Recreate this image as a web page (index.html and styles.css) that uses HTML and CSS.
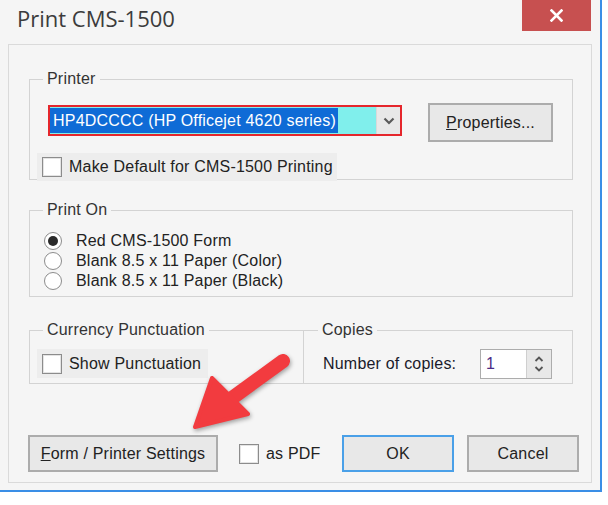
FILE: index.html
```html
<!DOCTYPE html>
<html>
<head>
<meta charset="utf-8">
<link rel="stylesheet" href="styles.css">
</head>
<body>
<div class="window">
  <div class="titlebar">
    <div class="title">Print CMS-1500</div>
    <div class="close">
      <svg width="13" height="13" viewBox="0 0 13 13"><path d="M1.5 1.5 L11.5 11.5 M11.5 1.5 L1.5 11.5" stroke="#fff" stroke-width="2.6" stroke-linecap="square"/></svg>
    </div>
  </div>
  <div class="panel">
    <fieldset class="group printer">
      <legend>Printer</legend>
      <div class="printer-row">
        <div class="combo">
          <div class="combo-field"><span class="sel">HP4DCCCC (HP Officejet 4620 series)</span></div>
          <div class="combo-btn">
            <svg width="12" height="8" viewBox="0 0 12 8"><path d="M1.5 1.5 L6 6 L10.5 1.5" fill="none" stroke="#5a5a5a" stroke-width="2.2"/></svg>
          </div>
        </div>
        <button class="btn props"><u>P</u>roperties...</button>
      </div>
      <div class="check-row default-row"><span class="box"></span><span>Make Default for CMS-1500 Printing</span></div>
    </fieldset>

    <fieldset class="group printon">
      <legend>Print On</legend>
      <div class="radio-row"><span class="radio checked"></span><span>Red CMS-1500 Form</span></div>
      <div class="radio-row"><span class="radio"></span><span>Blank 8.5 x 11 Paper (Color)</span></div>
      <div class="radio-row"><span class="radio"></span><span>Blank 8.5 x 11 Paper (Black)</span></div>
    </fieldset>

    <div class="split">
      <fieldset class="group currency">
        <legend>Currency Punctuation</legend>
        <div class="check-row punct-row"><span class="box"></span><span>Show Punctuation</span></div>
      </fieldset>
      <fieldset class="group copies">
        <legend>Copies</legend>
        <div class="copies-row">
          <span class="copies-label">Number of copies:</span>
          <div class="spin">
            <span class="spin-val">1</span>
            <div class="spin-btns">
              <svg width="10" height="6" viewBox="0 0 10 6"><path d="M1.5 5 L5 1.5 L8.5 5" fill="none" stroke="#555" stroke-width="1.8"/></svg>
              <svg width="10" height="6" viewBox="0 0 10 6"><path d="M1.5 1 L5 4.5 L8.5 1" fill="none" stroke="#555" stroke-width="1.8"/></svg>
            </div>
          </div>
        </div>
      </fieldset>
    </div>

    <div class="actions">
      <button class="btn settings"><u>F</u>orm / Printer Settings</button>
      <div class="pdf"><span class="box"></span><span>as PDF</span></div>
      <button class="btn ok">OK</button>
      <button class="btn cancel">Cancel</button>
    </div>
  </div>
</div>
<svg class="arrow" width="608" height="505" viewBox="0 0 608 505">
  <line x1="283" y1="361" x2="228" y2="401" stroke="#f23b3f" stroke-width="14" stroke-linecap="round"/>
  <polygon points="195,427 212,378 248,414" fill="#f23b3f" stroke="#f23b3f" stroke-width="4" stroke-linejoin="round"/>
</svg>
</body>
</html>
```

FILE: styles.css
```css
html, body {
  margin: 0;
  padding: 0;
}
body {
  width: 608px;
  height: 505px;
  background: #ffffff;
  font-family: "Liberation Sans", Arial, sans-serif;
  font-size: 16px;
  letter-spacing: 0.2px;
  color: #222;
  position: relative;
  overflow: hidden;
}
.window {
  width: 600px;
  height: 490px;
  background: #f5f5f5;
  border-right: 2px solid #3a8ee6;
  border-bottom: 2px solid #3a8ee6;
}
.titlebar {
  height: 44px;
  display: flex;
  justify-content: space-between;
  align-items: flex-start;
}
.title {
  margin: 3px 0 0 17px;
  font-family: "Open Sans", "Noto Sans", sans-serif;
  font-size: 22px;
  line-height: 30px;
  letter-spacing: 0;
  color: #3c3c3c;
}
.close {
  width: 69px;
  height: 31px;
  margin-right: 9px;
  background: #c75050;
  display: flex;
  align-items: center;
  justify-content: center;
}
.panel {
  margin-left: 8px;
  width: 584px;
  height: 439px;
  box-sizing: border-box;
  border: 1px solid #dadada;
  padding: 25px 18px 0 20px;
  display: flex;
  flex-direction: column;
}
.group {
  margin: 0;
  border: 1px solid #d3d3d3;
  min-inline-size: 0;
}
.group legend {
  padding: 0 4px;
  margin-left: -5px;
  line-height: 18px;
  color: #333;
}
.printer {
  padding: 15px 0 0 18px;
}
.printer-row {
  display: flex;
  align-items: flex-start;
}
.combo {
  margin-top: 2px;
  width: 354px;
  height: 31px;
  box-sizing: border-box;
  border: 2px solid #e5262c;
  background: #80efec;
  display: flex;
}
.combo-field {
  flex: 1;
  display: flex;
  padding: 1px 0;
}
.sel {
  background: #0f6bd6;
  color: #fff;
  line-height: 25px;
  padding: 0 2px 0 3px;
}
.combo-btn {
  width: 23px;
  border-left: 1px solid #d9d9d9;
  background: #e8e8e8;
  display: flex;
  align-items: center;
  justify-content: center;
}
.btn {
  font: inherit;
  letter-spacing: inherit;
  color: #222;
  background: #e8e8e8;
  border: 2px solid #acacac;
  box-sizing: border-box;
  padding: 0;
  margin: 0;
}
.props {
  margin-left: 26px;
  width: 125px;
  height: 39px;
}
.check-row {
  display: flex;
  align-items: center;
  gap: 7px;
  background: #ededed;
  padding-left: 5px;
  box-sizing: border-box;
}
.box {
  width: 20px;
  height: 20px;
  box-sizing: border-box;
  border: 1px solid #8c8c8c;
  box-shadow: inset 0 0 0 1px #e4e4e4;
  background: #fff;
  flex: none;
}
.default-row {
  margin: 11px 0 -2px -11px;
  width: 300px;
  height: 28px;
}
.printon {
  margin-top: 21px;
  padding: 12px 0 5px 18px;
}
.radio-row {
  display: flex;
  align-items: center;
  height: 20px;
  line-height: 20px;
}
.radio {
  width: 18px;
  height: 18px;
  box-sizing: border-box;
  border-radius: 50%;
  border: 1px solid #8c8c8c;
  background: #fff;
  margin: 0 14px 0 -4px;
  display: flex;
  align-items: center;
  justify-content: center;
  flex: none;
}
.radio.checked::after {
  content: "";
  width: 10px;
  height: 10px;
  border-radius: 50%;
  background: #2a2a2a;
}
.split {
  margin-top: 24px;
  display: grid;
  grid-template-columns: 275px 1fr;
}
.currency {
  padding: 10px 0 5px 18px;
}
.punct-row {
  margin-left: -11px;
  width: 171px;
  height: 29px;
}
.copies {
  border-left: none;
  padding: 10px 0 4px 19px;
}
.copies-row {
  display: flex;
  align-items: center;
}
.copies-label {
  width: 157px;
  color: #1a1a2a;
}
.spin {
  width: 72px;
  height: 30px;
  box-sizing: border-box;
  border: 1px solid #acacac;
  background: #fff;
  display: flex;
}
.spin-val {
  flex: 1;
  padding-left: 5px;
  line-height: 28px;
  color: #4b2c86;
}
.spin-btns {
  width: 24px;
  border-left: 1px solid #cfcfcf;
  background: #e8e8e8;
  display: flex;
  flex-direction: column;
  align-items: center;
  justify-content: center;
  gap: 4px;
}
.actions {
  margin: 51px -6px 0 -1px;
  display: flex;
  align-items: center;
}
.settings {
  width: 190px;
  height: 37px;
}
.pdf {
  margin-left: 21px;
  display: flex;
  align-items: center;
  gap: 7px;
}
.ok {
  margin-left: auto;
  width: 112px;
  height: 37px;
  border-color: #4aa0e8;
}
.cancel {
  margin-left: 13px;
  width: 112px;
  height: 37px;
}
.arrow {
  position: absolute;
  left: 0;
  top: 0;
  pointer-events: none;
  filter: drop-shadow(1px 2px 2px rgba(0, 0, 0, 0.35));
}
```
